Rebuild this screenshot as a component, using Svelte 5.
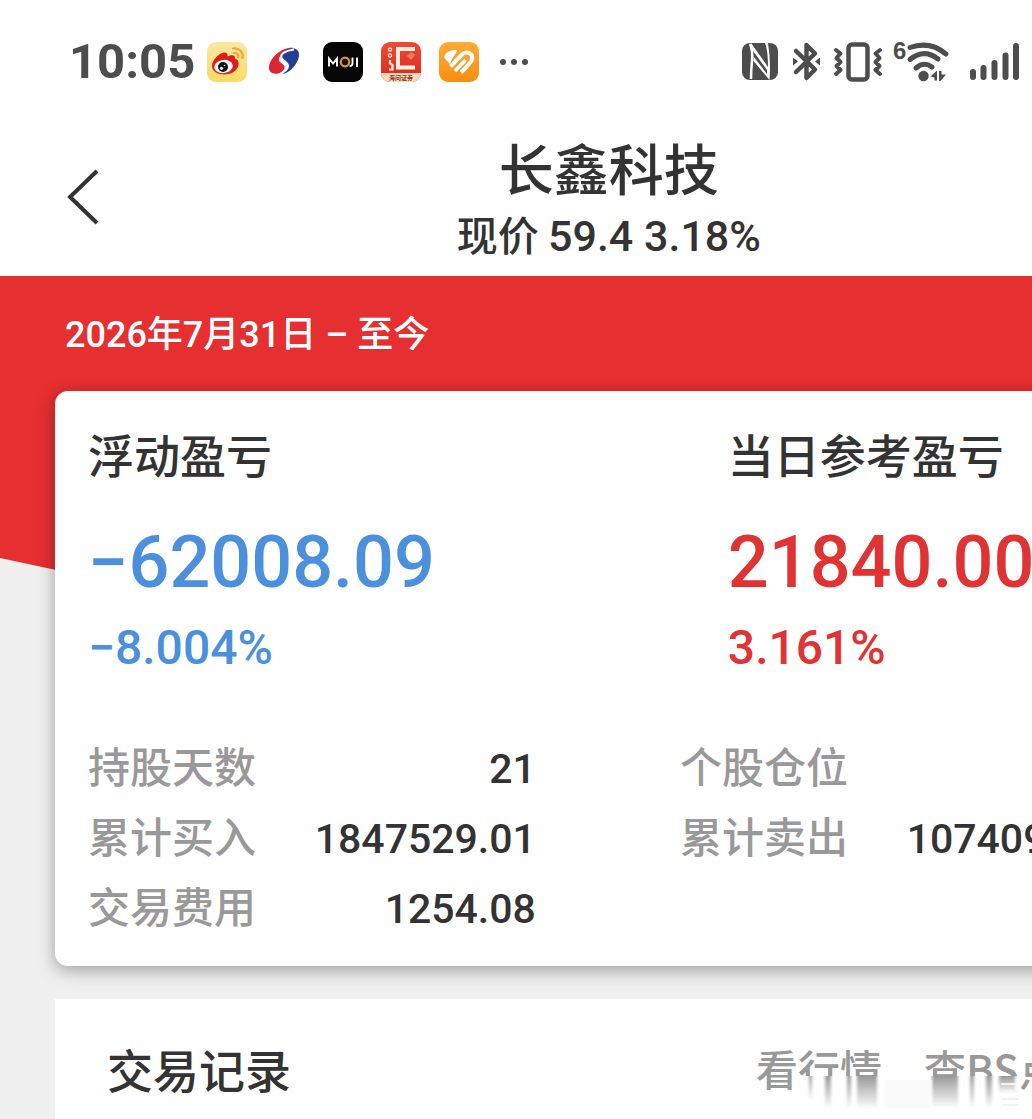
<script>
  const quote = { name: '长鑫科技', label: '现价', price: '59.4', change: '3.18%' };

  const summary = [
    { title: '浮动盈亏', amount: '−62008.09', percent: '−8.004%', trend: 'loss' },
    { title: '当日参考盈亏', amount: '21840.00', percent: '3.161%', trend: 'gain' }
  ];

  const details = [
    { label: '持股天数', value: '21' },
    { label: '个股仓位', value: '' },
    { label: '累计买入', value: '1847529.01' },
    { label: '累计卖出', value: '1074096.00' },
    { label: '交易费用', value: '1254.08' }
  ];
</script>

<div class="status-bar">
  <span class="clock">10:05</span>
  <div class="apps">
    <!-- weibo -->
    <svg viewBox="0 0 40 40">
      <defs>
        <linearGradient id="weibo" x1="0" y1="0" x2="0" y2="1">
          <stop offset="0" stop-color="#fbe7a4" />
          <stop offset="1" stop-color="#fbdb63" />
        </linearGradient>
      </defs>
      <rect width="40" height="40" rx="9" fill="url(#weibo)" />
      <path d="M5 24c0-6 7-13 12-13.500c3-.3 4 1.500 3.500 4c4-2 8-2 7.500 2c3 1 4 3 3.500 6c-.5 6-7 10-14 10S5 29.500 5 24z" fill="#df1e1c" />
      <ellipse cx="16.500" cy="24.500" rx="9.300" ry="6.600" fill="#fff" transform="rotate(-8 16.500 24.500)" />
      <circle cx="16" cy="25" r="5" fill="#111" />
      <circle cx="14.500" cy="26.300" r="1.600" fill="#fff" />
      <circle cx="17.500" cy="23.500" r=".8" fill="#fff" />
      <path d="M26 6.500c6-1 10.500 3.500 9.500 9.500M27 11c3-.3 4.700 1.700 4.300 4.500" fill="none" stroke="#efa63c" stroke-width="2.200" stroke-linecap="round" />
    </svg>
    <!-- brokerage -->
    <svg viewBox="0 0 40 40">
      <path d="M29 6C18 4 5 15 4 25c-.5 5 4 7.500 9 6.500c5-1 8-5 6-8c-1.500-2.500-6-3-5-7C15 12 22 9 29 6z" fill="#dc2533" />
      <path d="M17 32c9-1 17-12 17-19c0-4-2-6.500-6-6.500c-6 0-11 3-11 7.500c0 4 7 5 7 10c0 3-3 6-7 8z" fill="#223f94" />
      <path d="M29 7.500c-8 1-13.500 4-13 8c.5 3 6 3.500 6 8c0 3-2 5-6 8" fill="none" stroke="#fff" stroke-width="1.800" />
    </svg>
    <!-- moji weather -->
    <svg viewBox="0 0 40 40">
      <rect width="40" height="40" rx="9" fill="#050505" />
      <path d="M6 24.500V16.500L10 21.500L14 16.500V24.500M29.500 15.500V21.500Q29.500 24 26.500 24M34 15.500V25" fill="none" stroke="#fff" stroke-width="1.900" />
      <circle cx="22" cy="20" r="4.300" fill="#1b1208" stroke="#dc9442" stroke-width="2.200" />
    </svg>
    <!-- securities -->
    <svg viewBox="0 0 40 40">
      <defs>
        <clipPath id="tile"><rect width="40" height="40" rx="9" /></clipPath>
        <linearGradient id="red-tile" x1="0" y1="0" x2="0" y2="1">
          <stop offset="0" stop-color="#ef4b38" />
          <stop offset="1" stop-color="#d9251d" />
        </linearGradient>
      </defs>
      <g clip-path="url(#tile)">
        <rect width="40" height="40" fill="url(#red-tile)" />
        <rect y="31" width="40" height="9" fill="#f8d9bc" />
        <path d="M34 7H17V25.500H34" fill="none" stroke="#fff0dc" stroke-width="4" />
        <circle cx="9" cy="7.500" r="1.600" fill="none" stroke="#fff0dc" stroke-width="1.200" />
        <circle cx="9" cy="13.500" r="1.600" fill="none" stroke="#fff0dc" stroke-width="1.200" />
        <path d="M9 18V21.500L11.500 23V27.500H8" fill="none" stroke="#fff0dc" stroke-width="2.200" />
        <path d="M26 14l4-4l4 3l-4 5z" fill="#f47a67" />
        <text class="tile-name" x="20" y="38">海问证券</text>
      </g>
    </svg>
    <!-- orange heart -->
    <svg viewBox="0 0 40 40">
      <defs>
        <linearGradient id="orange-tile" x1="0" y1="0" x2="0" y2="1">
          <stop offset="0" stop-color="#ffac35" />
          <stop offset="1" stop-color="#f98e12" />
        </linearGradient>
      </defs>
      <rect width="40" height="40" rx="9" fill="url(#orange-tile)" />
      <path d="M18 8C13 7.500 6 10 5 15c2 3 4 5.500 6.500 7C12 16 17 13 18 8z" fill="#fff" />
      <path d="M11.500 24.500L23 12.500C27 8.500 34.500 11 33 17.500C32.500 20 27 25.500 22 30.500" fill="none" stroke="#fff" stroke-width="4" />
      <path d="M16 29L26.500 18" fill="none" stroke="#fff" stroke-width="3.600" />
    </svg>
    <svg viewBox="0 0 40 40">
      <g fill="#4d4d4d">
        <circle cx="6" cy="20" r="3" />
        <circle cx="17" cy="20" r="3" />
        <circle cx="28" cy="20" r="3" />
      </g>
    </svg>
  </div>

  <svg class="signals" viewBox="0 0 278 42">
    <!-- nfc -->
    <rect x="0" y="2" width="36" height="37" rx="8" fill="#4d4d4d" />
    <path d="M8 3Q11 10 10 20T9 38" fill="none" stroke="#fff" stroke-width="2.500" />
    <path d="M9 2L26 26Q26 9 23 2H26Q29 20 27.500 39L11.500 20V15.500L25 33V29L9 7z" fill="#fff" />
    <!-- bluetooth -->
    <path d="M54 10L73 28.500L64.500 37V4L73 12.500L54 31" fill="none" stroke="#4d4d4d" stroke-width="4.500" stroke-linecap="round" stroke-linejoin="round" />
    <path d="M51 16.500L56 20.500L51 24.500zM78 16.500L73 20.500L78 24.500z" fill="#4d4d4d" />
    <!-- vibrate -->
    <rect x="106.500" y="3.500" width="19" height="35" rx="3.500" fill="none" stroke="#4d4d4d" stroke-width="4.500" />
    <path d="M94 9L98.500 12.500L94.500 17L98.500 21L94.500 25L98.500 29L94 33M138 9L133.500 12.500L137.500 17L133.500 21L137.500 25L133.500 29L138 33" fill="none" stroke="#4d4d4d" stroke-width="4" stroke-linecap="round" stroke-linejoin="round" />
    <!-- wifi -->
    <text class="wifi-band" x="151" y="18">6</text>
    <path d="M168 6.500Q188-.5 204 13M168 18.500Q182 7 196 18M174 27Q182 20 190 26" fill="none" stroke="#4d4d4d" stroke-width="5" stroke-linecap="round" />
    <circle cx="181.500" cy="35" r="5.200" fill="#4d4d4d" />
    <path d="M188.500 35.500L195 29.500V39.500H192.500V36.500zM197 30H199.500V33.500H204L198.500 40H197z" fill="#4d4d4d" />
    <!-- cell -->
    <path d="M231 31V36M241.500 27V36M252.500 22V36M263.500 14.500V36M274 5V36" fill="none" stroke="#4d4d4d" stroke-width="6" stroke-linecap="round" />
  </svg>
</div>

<div class="screen">
  <header>
    <button class="back" aria-label="返回">
      <svg viewBox="0 0 34 56"><path d="M31 2L4 28L31 54" fill="none" stroke="#333" stroke-width="4" /></svg>
    </button>
    <h1>{quote.name}</h1>
    <p>{quote.label} <span class="price">{quote.price} {quote.change}</span></p>
  </header>

  <main>
    <p class="period">2026年7月31日 – 至今</p>

    <section class="card">
      <div class="summary">
        {#each summary as item}
          <div>
            <h2>{item.title}</h2>
            <p class="amount {item.trend}">{item.amount}</p>
            <p class="percent {item.trend}">{item.percent}</p>
          </div>
        {/each}
      </div>

      <dl class="details">
        {#each details as row}
          <div class="row">
            <dt>{row.label}</dt>
            <dd>{row.value}</dd>
          </div>
        {/each}
      </dl>
    </section>

    <section class="records">
      <h2>交易记录</h2>
      <nav>
        <a href="#quote">看行情</a>
        <a href="#bs">查BS点</a>
      </nav>
      <!-- faded strip over the lower edge of the links -->
      <svg class="fade" viewBox="0 0 216 34">
        <defs>
          <linearGradient id="streak" x1="0" y1="0" x2="0" y2="1">
            <stop offset="0" stop-color="#999" />
            <stop offset="1" stop-color="#999" stop-opacity="0" />
          </linearGradient>
          <filter id="soft"><feGaussianBlur stdDeviation="1.500 0" /></filter>
        </defs>
        <rect width="216" height="34" fill="#fff" />
        <g fill="url(#streak)" filter="url(#soft)">
          <rect x="4" y="0" width="3" height="24" />
          <rect x="20" y="0" width="6" height="32" />
          <rect x="42" y="0" width="4" height="33" />
          <rect x="52" y="0" width="20" height="33" />
          <rect x="127" y="0" width="26" height="32" />
          <rect x="165" y="0" width="4" height="32" />
          <rect x="181" y="0" width="6" height="32" />
          <rect x="194" y="0" width="16" height="18" />
        </g>
        <rect x="80" y="4" width="46" height="28" fill="#fafafa" filter="url(#soft)" />
        <path d="M196 8H212M198 15H213M196 23H214M198 29H213" stroke="#f3f3f3" stroke-width="2" />
      </svg>
    </section>
  </main>
</div>

<style>
  :global(body) {
    margin: 0;
    overflow-x: hidden;
    background-color: #fff;
    color: #333;
    font-family: "Noto Sans CJK SC", sans-serif;
    font-weight: 500;
  }

  h1, h2, p, dl, dd {
    margin: 0;
    font-weight: 500;
  }

  .clock, .price, .period, .amount, .percent, dd {
    font-family: Roboto, "Noto Sans CJK SC", sans-serif;
  }

  .status-bar {
    display: flex;
    align-items: center;
    height: 124px;
    padding: 0 12px 0 69px;
    box-sizing: border-box;
  }

  .clock {
    width: 138px;
    color: #4d4d4d;
    font-size: 49px;
    line-height: 60px;
    font-weight: 700;
  }

  .apps {
    display: flex;
    gap: 18px;
  }

  .apps svg {
    width: 40px;
    height: 40px;
  }

  .tile-name {
    fill: #8a3a22;
    font-size: 6px;
    font-weight: 700;
    text-anchor: middle;
  }

  .signals {
    width: 278px;
    height: 42px;
    margin-left: auto;
    overflow: visible;
  }

  .wifi-band {
    fill: #4d4d4d;
    font-size: 24px;
    font-weight: 700;
    font-family: "Liberation Sans", sans-serif;
  }

  /* the screen runs wider than the window, the right part is cut off */
  .screen {
    width: 118%;
    overflow: hidden;
  }

  header {
    position: relative;
    height: 152px;
    padding-top: 10px;
    box-sizing: border-box;
    text-align: center;
  }

  h1 {
    font-size: 55px;
    line-height: 64px;
  }

  header p {
    font-size: 41px;
    line-height: 70px;
  }

  .price {
    font-size: 43px;
  }

  .back {
    position: absolute;
    top: 45px;
    left: 66px;
    padding: 0;
    border: none;
    background: none;
    cursor: pointer;
  }

  .back svg {
    display: block;
    width: 34px;
    height: 56px;
  }

  main {
    position: relative;
    background-color: #f0f0f0;
  }

  /* red banner behind the card */
  main::before {
    content: "";
    position: absolute;
    inset: 0 0 auto;
    height: 350px;
    background-color: #e62f30;
    clip-path: polygon(0 0, 100% 0, 100% 282px, 95% 295px, 50% 350px, 5% 295px, 0 282px);
  }

  .period {
    position: relative;
    padding: 33px 65px 30px;
    color: #fff;
    font-size: 36px;
    line-height: 52px;
  }

  .card {
    position: relative;
    margin: 0 55px 33px;
    padding: 32px 35px 26px 33px;
    border-radius: 13px;
    background-color: #fff;
    box-shadow: 0 4px 18px rgba(0, 0, 0, 0.35);
  }

  .summary {
    display: grid;
    grid-template-columns: 8fr 5fr;
    padding-bottom: 49px;
  }

  h2 {
    font-size: 46px;
    line-height: 60px;
  }

  .amount {
    padding-top: 28px;
    font-size: 72px;
    line-height: 104px;
  }

  .percent {
    font-size: 48px;
    line-height: 66px;
  }

  .loss {
    color: #4a90dd;
  }

  .gain {
    color: #e03333;
  }

  .details {
    display: grid;
    grid-template-columns: 1fr 1fr;
    column-gap: 144px;
  }

  .row {
    display: flex;
    align-items: baseline;
    justify-content: space-between;
    height: 70px;
    font-size: 42px;
    line-height: 70px;
  }

  dt {
    color: #999;
  }

  dd {
    font-size: 41px;
  }

  .records {
    position: relative;
    display: flex;
    align-items: center;
    justify-content: space-between;
    margin: 0 55px;
    padding: 39px 102px 21px 52px;
    background-color: #fff;
  }

  nav {
    display: flex;
    gap: 42px;
  }

  nav a {
    color: #999;
    font-size: 42px;
    line-height: 60px;
    text-decoration: none;
  }

  .fade {
    position: absolute;
    top: 77px;
    left: 750px;
    width: 216px;
    height: 34px;
  }
</style>
